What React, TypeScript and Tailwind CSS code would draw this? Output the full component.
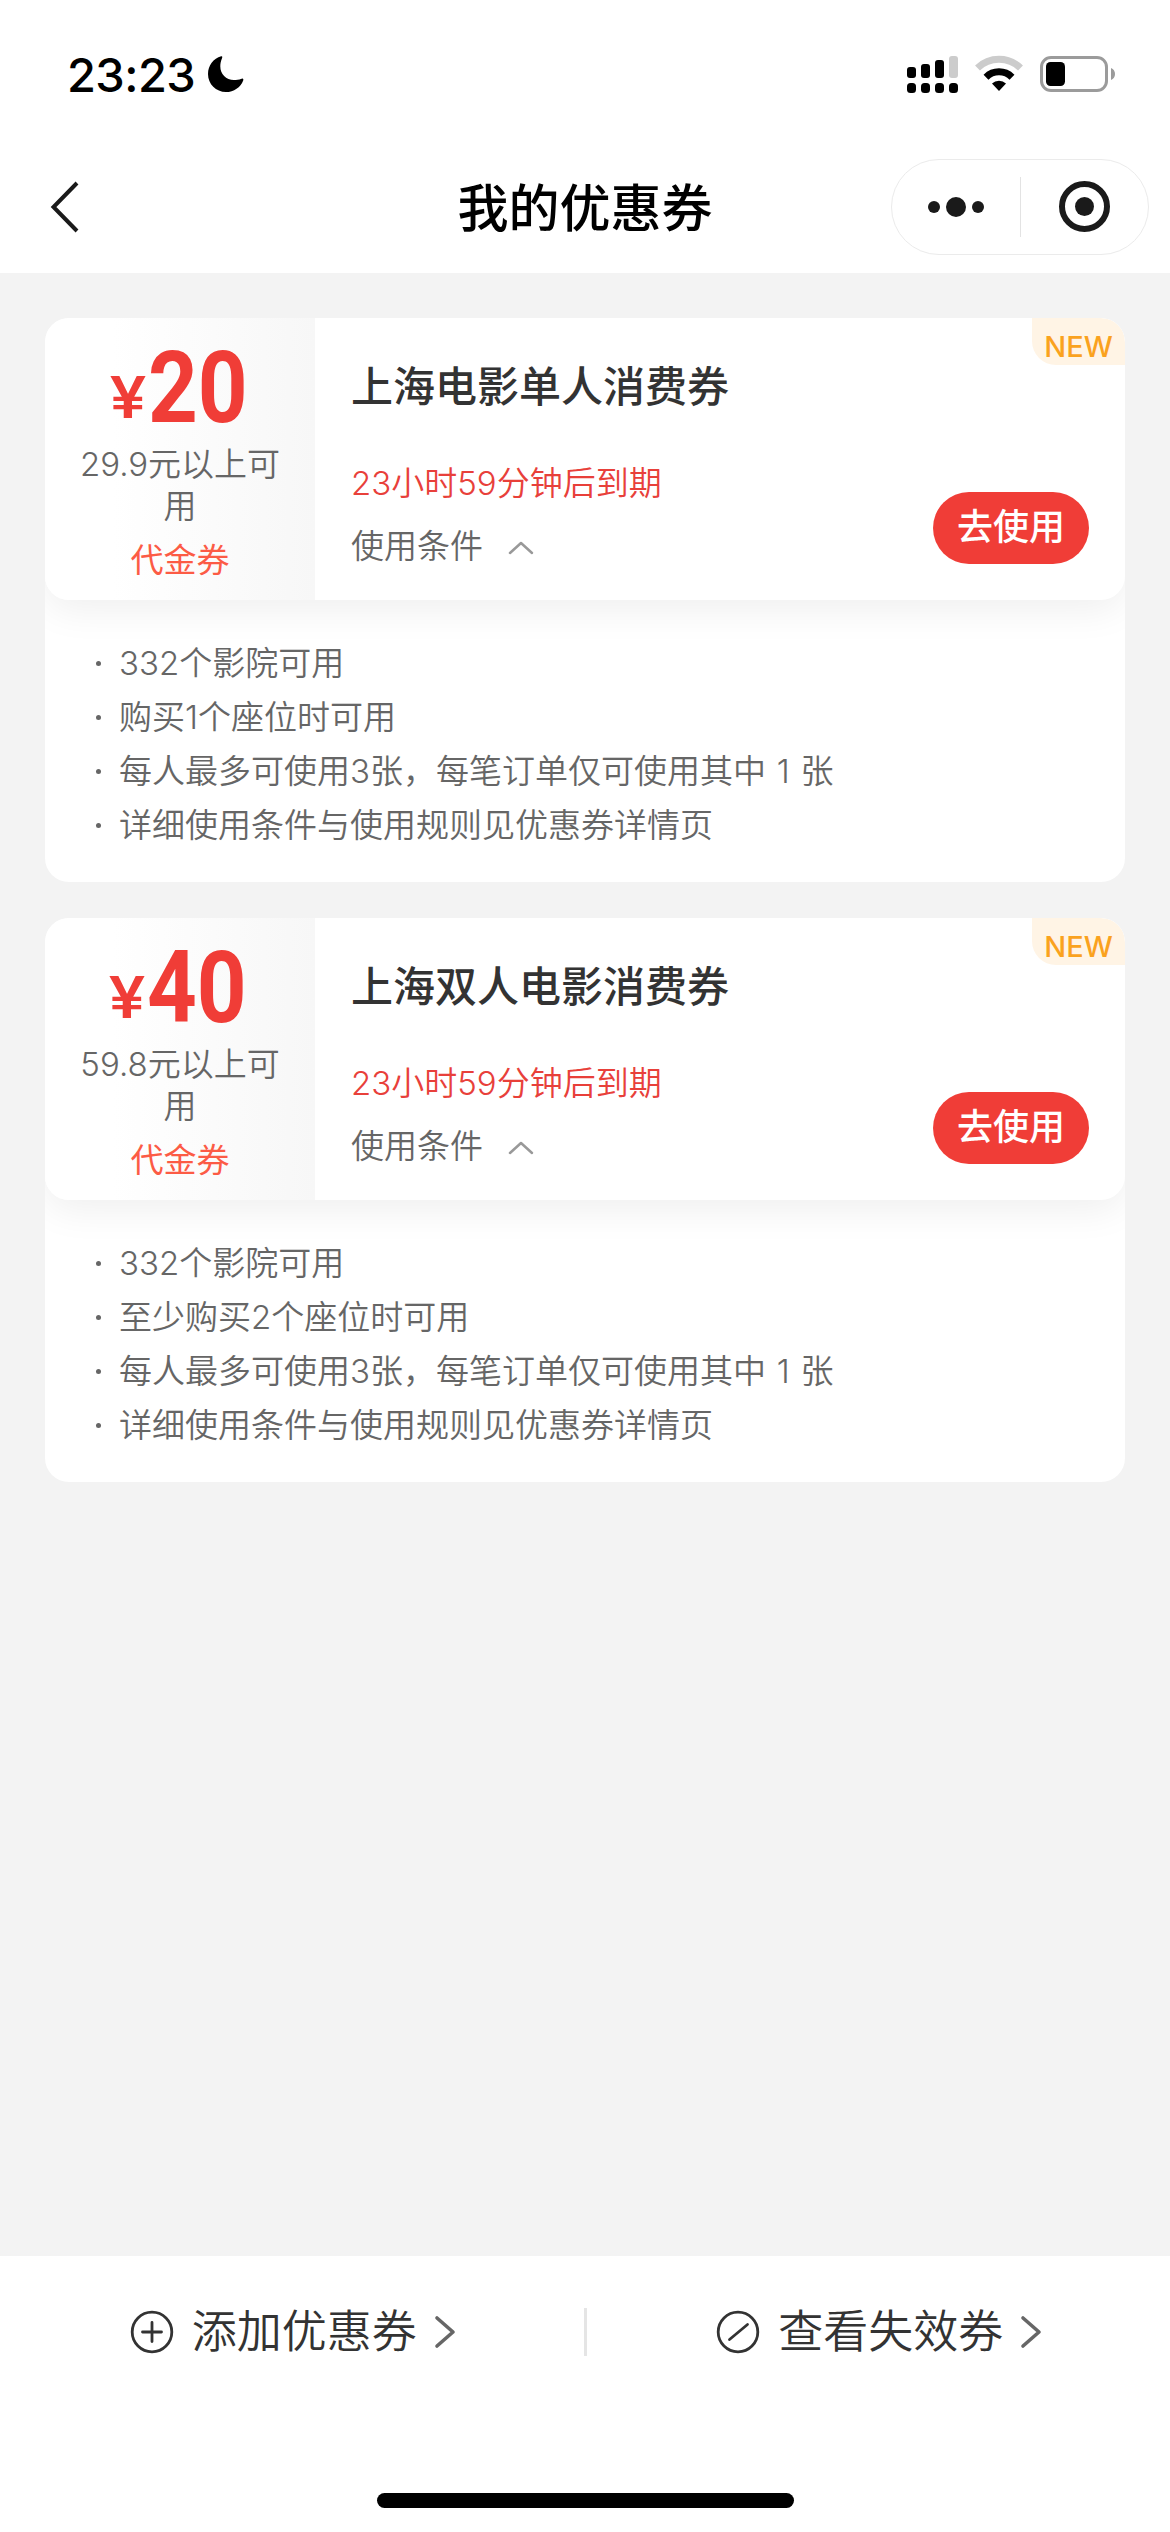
import React from "react";

type Coupon = {
  amount: string;
  amountClass: string;
  threshold: string;
  title: string;
  rules: string[];
};

const coupons: Coupon[] = [
  {
    amount: "20",
    amountClass: "flex h-[125px] items-start justify-center",
    threshold: "29.9元以上可用",
    title: "上海电影单人消费券",
    rules: [
      "332个影院可用",
      "购买1个座位时可用",
      "每人最多可使用3张，每笔订单仅可使用其中 1 张",
      "详细使用条件与使用规则见优惠券详情页",
    ],
  },
  {
    amount: "40",
    amountClass: "flex h-[125px] items-start justify-center pr-[3px]",
    threshold: "59.8元以上可用",
    title: "上海双人电影消费券",
    rules: [
      "332个影院可用",
      "至少购买2个座位时可用",
      "每人最多可使用3张，每笔订单仅可使用其中 1 张",
      "详细使用条件与使用规则见优惠券详情页",
    ],
  },
];

function StatusBar() {
  return (
    <div className="flex h-[141px] items-start justify-between pt-[48px] pr-[54px] pl-[67px]">
      <div className="flex items-center">
        <span className="w-[141px] text-[47px] leading-[54px] font-[550] tracking-[-0.6px] text-black">23:23</span>
        <svg className="mt-[-2px] h-[36px] w-[36px]" viewBox="0 0 36 36">
          <path
            d="M13.2.3C5.400 2.300 0 9.600 0 18c0 10.200 8 18 18 18 7.800 0 14.600-4.800 17.200-11.600.5-1.300-.1-2.100-1.500-1.700C30.500 23.700 28.500 24 26 24 18 24 12.300 18.300 12.300 10.300c0-3 .6-5.500 1.700-8.100C14.600.8 14.300 0 13.200.3Z"
            fill="#000"
          />
        </svg>
      </div>
      <div className="flex items-start gap-[17px] pt-[7px]">
        <svg className="h-[39px] w-[51px]" viewBox="0 0 51 39">
          <rect x="0" y="12" width="9" height="11" rx="3" />
          <rect x="14" y="9" width="9" height="14" rx="3" />
          <rect x="28" y="5" width="9" height="18" rx="3" />
          <rect x="42" y="1" width="9" height="22" rx="3" fill="#ccc" />
          <rect x="0" y="28" width="9" height="10" rx="3.500" />
          <rect x="14" y="28" width="9" height="10" rx="3.500" />
          <rect x="28" y="28" width="9" height="10" rx="3.500" />
          <rect x="42" y="28" width="9" height="10" rx="3.500" />
        </svg>
        <svg className="h-[37px] w-[48px]" viewBox="0 0 48 37" fill="none">
          <path d="M2.500 13A31 31 0 0 1 45.500 13" stroke="#ccc" strokeWidth="7" />
          <path d="M11 22.200A18.500 18.500 0 0 1 37 22.200" stroke="#000" strokeWidth="7" />
          <path d="M17 28.500A10 10 0 0 1 31 28.500L24 36Z" fill="#000" />
        </svg>
        <svg className="h-[38px] w-[76px]" viewBox="0 0 76 38">
          <rect x="1.500" y="2.500" width="65" height="33" rx="9.500" fill="none" stroke="#9b9b9b" strokeWidth="3" />
          <rect x="6" y="7" width="19" height="24" rx="4.500" />
          <path d="M71 13v12c2.500-1 4-3.300 4-6s-1.500-5-4-6Z" fill="#9b9b9b" />
        </svg>
      </div>
    </div>
  );
}

function NavBar() {
  return (
    <div className="grid h-[132px] grid-cols-[1fr_auto_1fr] items-start px-[21px]">
      <svg className="mt-[39px] ml-[28px] h-[54px] w-[32px]" viewBox="0 0 32 54" fill="none" stroke="#1a1a1a" strokeWidth="4">
        <path d="M28 3L4.500 27L28 51" />
      </svg>
      <h1 className="mt-[32px] text-[51px] leading-[72px] font-medium text-black">我的优惠券</h1>
      <div className="mt-[18px] flex h-[96px] w-[258px] items-center justify-self-end rounded-full border border-[#ebebeb]">
        <div className="flex flex-1 items-center justify-center gap-[6px] pl-[1px]">
          <span className="size-[12px] rounded-full bg-[#1a1a1a]" />
          <span className="size-[20px] rounded-full bg-[#1a1a1a]" />
          <span className="size-[12px] rounded-full bg-[#1a1a1a]" />
        </div>
        <div className="h-[60px] w-px bg-[#e3e3e3]" />
        <div className="flex flex-1 items-center justify-center pb-[1px] pl-[1px]">
          <span className="flex size-[51px] items-center justify-center rounded-full border-[6px] border-[#1a1a1a]">
            <span className="size-[19px] rounded-full bg-[#1a1a1a]" />
          </span>
        </div>
      </div>
    </div>
  );
}

function CouponCard({ coupon }: { coupon: Coupon }) {
  return (
    <section className="h-[564px] overflow-hidden rounded-[24px] bg-white">
      <div className="relative flex h-[282px] rounded-[24px] bg-white shadow-[0_10px_38px_rgba(0,0,0,0.065)]">
        <div className="flex w-[270px] flex-col items-center rounded-l-[24px] bg-linear-to-r from-white from-25% to-[#f7f7f7] text-center font-[350]">
          <div className={coupon.amountClass}>
            <span className="mt-[47px] w-[38px] text-left font-[Roboto] text-[60px] leading-[66px] font-medium text-[#f03d37]">
              <span className="inline-block origin-left scale-x-[1.13]">¥</span>
            </span>
            <span className="mt-[10px] w-[102px] text-left font-[Roboto] text-[101px] leading-[120px] font-bold text-[#f03d37]">
              <span className="inline-block origin-left scale-x-[0.86]">{coupon.amount}</span>
            </span>
          </div>
          <p className="w-[210px] text-[33px] leading-[42px] text-[#666]">{coupon.threshold}</p>
          <p className="mt-[12px] text-[33px] leading-[42px] font-normal text-[#fc5b45]">代金券</p>
        </div>
        <div className="flex flex-1 flex-col pl-[36px]">
          <h2 className="mt-[39px] text-[42px] leading-[60px] font-medium text-[#333]">{coupon.title}</h2>
          <p className="mt-[42px] text-[33px] leading-[48px] font-[350] text-[#e8403a]">23小时59分钟后到期</p>
          <div className="mt-[15px] flex items-center gap-[24px]">
            <span className="text-[33px] leading-[48px] font-[350] text-[#666]">使用条件</span>
            <svg className="mt-[3px] h-[16px] w-[28px]" viewBox="0 0 28 16" fill="none" stroke="#999" strokeWidth="2.500" strokeLinecap="round" strokeLinejoin="round">
              <path d="M3 13L14 3L25 13" />
            </svg>
          </div>
        </div>
        <button className="mt-[174px] mr-[36px] h-[72px] w-[156px] rounded-full bg-[#f03d37] pb-[1px] text-[36px] leading-[71px] font-medium text-white">
          去使用
        </button>
        <span className="absolute top-0 right-0 h-[47px] w-[93px] rounded-tr-[24px] rounded-bl-[24px] bg-[#fff4e5] pt-[10px] text-center text-[29px] leading-[38px] font-medium text-[#faa21e]">
          NEW
        </span>
      </div>
      <ul className="flex flex-col pt-[36px] pl-[51px]">
        {coupon.rules.map((rule) => (
          <li key={rule} className="flex h-[54px] items-center gap-[18px] text-[33px] leading-[54px] font-[350] text-[#666] [word-spacing:1.5px]">
            <span className="size-[5px] rounded-full bg-[#666]" />
            <span>{rule}</span>
          </li>
        ))}
      </ul>
    </section>
  );
}

function FooterLink({ icon, label }: { icon: React.ReactNode; label: string }) {
  return (
    <div className="flex flex-1 items-center justify-center pl-[3px]">
      <svg className="h-[44px] w-[44px]" viewBox="0 0 44 44" fill="none" stroke="#333" strokeWidth="2.800" strokeLinecap="round">
        <circle cx="22" cy="22" r="19.800" />
        {icon}
      </svg>
      <span className="ml-[18px] text-[45px] leading-[66px] font-[350] text-[#333]">{label}</span>
      <svg className="ml-[16px] h-[34px] w-[24px]" viewBox="0 0 24 34" fill="none" stroke="#666" strokeWidth="3.600" strokeLinecap="round" strokeLinejoin="round">
        <path d="M4 3L20 17L4 31" />
      </svg>
    </div>
  );
}

export default function App() {
  return (
    <div className="flex h-[2532px] w-[1170px] flex-col overflow-hidden bg-[#f3f3f3] font-[Inter,'Noto_Sans_CJK_SC',sans-serif]">
      <header className="bg-white">
        <StatusBar />
        <NavBar />
      </header>
      <main className="flex flex-1 flex-col gap-[36px] px-[45px] pt-[45px]">
        {coupons.map((coupon) => (
          <CouponCard key={coupon.title} coupon={coupon} />
        ))}
      </main>
      <footer className="flex h-[276px] flex-col items-center justify-between bg-white pt-[43px] pb-[24px]">
        <div className="flex h-[66px] w-full items-center">
          <FooterLink label="添加优惠券" icon={<path d="M22 12.500V31.500M12.500 22H31.500" />} />
          <div className="h-[48px] w-[3px] bg-[#e5e5e5]" />
          <FooterLink label="查看失效券" icon={<path d="M13.500 29.500L31.500 14.500" />} />
        </div>
        <div className="h-[15px] w-[417px] rounded-full bg-black" />
      </footer>
    </div>
  );
}
